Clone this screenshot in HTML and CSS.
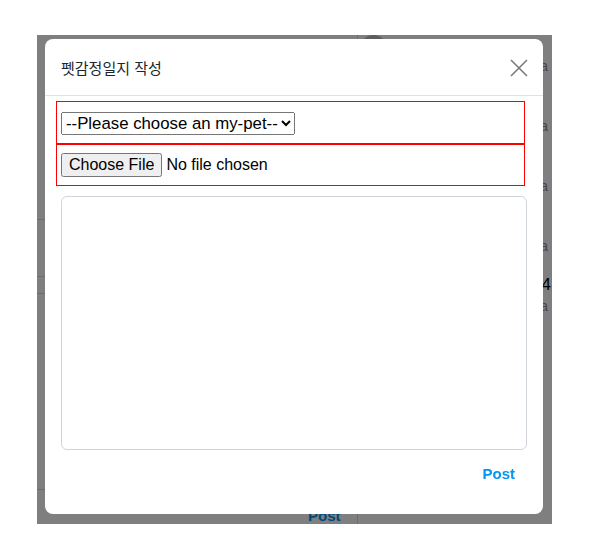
FILE: index.html
```html
<!DOCTYPE html>
<html lang="ko">
<head>
    <meta charset="UTF-8">
    <title>펫감정일지 작성</title>
    <link rel="stylesheet" href="styles.css">
</head>
<body>
    <div class="page">
        <!-- 피드 영역 (모달 뒤) -->
        <div class="feed">
            <div class="feed-block b1"></div>
            <div class="feed-block b2"></div>
            <div class="feed-block b3"></div>
            <div class="feed-block b4"></div>
            <div class="feed-foot"><span class="under-post">Post</span></div>
        </div>
        <div class="side">
            <div class="avatar"></div>
            <div class="side-list">
                <div class="side-item">Luna</div>
                <div class="side-item">Dada</div>
                <div class="side-item">Coca</div>
                <div class="side-item">Nana</div>
                <div class="side-item last">
                    <span class="side-count">4</span>
                    <span>Mia</span>
                </div>
            </div>
        </div>
        <div class="backdrop"></div>
    </div>

    <!-- 펫감정일지 작성 모달 -->
    <div class="modal">
        <div class="modal-header">
            <h5 class="modal-title">펫감정일지 작성</h5>
            <button class="btn-close" type="button">
                <svg width="18" height="18" viewBox="0 0 18 18">
                    <path d="M1 1 L17 17 M17 1 L1 17" stroke="#7a7a7a" stroke-width="1.6" fill="none"/>
                </svg>
            </button>
        </div>
        <div class="modal-body">
            <div class="field">
                <select class="pet-select">
                    <option>--Please choose an my-pet--</option>
                </select>
            </div>
            <div class="field">
                <input type="file" class="file-input">
            </div>
            <textarea class="diary-text"></textarea>
        </div>
        <div class="modal-footer">
            <button class="btn-post" type="button">Post</button>
        </div>
    </div>
</body>
</html>
```

FILE: styles.css
```css
body {
    margin: 0;
    background: #fff;
    font-family: 'Liberation Sans', Arial, sans-serif;
}
.page {
    position: relative;
    margin: 35px 0 0 37px;
    width: 515px;
    height: 489px;
    overflow: hidden;
    display: grid;
    grid-template-columns: 321px 1fr;
}
.feed {
    border-right: 1px solid #dbdbdb;
    display: flex;
    flex-direction: column;
}
.feed-block {
    border-bottom: 1px solid #dbdbdb;
}
.b1 { height: 184px; }
.b2 { height: 56px; }
.b3 { height: 16px; }
.b4 { height: 195px; }
.feed-foot {
    padding: 18px 0 0 271px;
    line-height: 16px;
}
.under-post {
    font-weight: bold;
    font-size: 15px;
    color: #0095f6;
}
.side {
    padding-left: 2px;
}
.avatar {
    width: 27px;
    height: 27px;
    border-radius: 50%;
    background: #bbb;
}
.side-list {
    margin-top: -26px;
}
.side-item {
    height: 60px;
    display: flex;
    flex-direction: column;
    justify-content: center;
    align-items: flex-end;
    padding-right: 4px;
    font-size: 14px;
    color: #8e8e8e;
}
.side-item.last {
    justify-content: flex-start;
    line-height: 24px;
}
.side-count {
    font-size: 17px;
    line-height: 18px;
    margin-right: -3px;
    color: #000;
}
.backdrop {
    position: absolute;
    inset: 0;
    background: rgba(0, 0, 0, 0.5);
}
.modal {
    position: fixed;
    top: 39px;
    left: 45px;
    width: 498px;
    height: 475px;
    box-sizing: border-box;
    background: #fff;
    border-radius: 8px;
    display: flex;
    flex-direction: column;
}
.modal-header {
    height: 57px;
    box-sizing: border-box;
    display: flex;
    align-items: center;
    justify-content: space-between;
    padding: 0 15px 0 16px;
    border-bottom: 1px solid #dee2e6;
}
.modal-title {
    margin: 0;
    font-family: 'Noto Sans CJK KR', sans-serif;
    font-size: 15px;
    font-weight: normal;
    color: #212529;
}
.btn-close {
    border: none;
    background: none;
    padding: 0;
    width: 18px;
    height: 18px;
    margin-top: 1px;
}
.btn-close svg {
    display: block;
}
.modal-body {
    padding: 5px 16px 0;
    display: flex;
    flex-direction: column;
}
.field {
    height: 43px;
    box-sizing: border-box;
    margin: 0 2px 0 -5px;
    padding: 0 4px;
    border: 1px solid #f00;
    display: flex;
    align-items: center;
}
.field + .field {
    margin-top: -1px;
    border-top-width: 2px;
}
.pet-select,
.file-input {
    font-family: 'Liberation Sans', Arial, sans-serif;
    font-size: 16px;
    margin: 0;
}
.pet-select {
    font-size: 16.8px;
    margin-top: 2px;
}
.diary-text {
    margin-top: 10px;
    height: 254px;
    box-sizing: border-box;
    border: 1px solid #ced4da;
    border-radius: 6px;
    resize: none;
}
.modal-footer {
    display: flex;
    justify-content: flex-end;
    padding: 9px 16px 0;
}
.btn-post {
    border: none;
    background: none;
    padding: 6px 12px;
    font-family: 'Liberation Sans', Arial, sans-serif;
    font-weight: bold;
    font-size: 15px;
    color: #0095f6;
    cursor: pointer;
}
```
